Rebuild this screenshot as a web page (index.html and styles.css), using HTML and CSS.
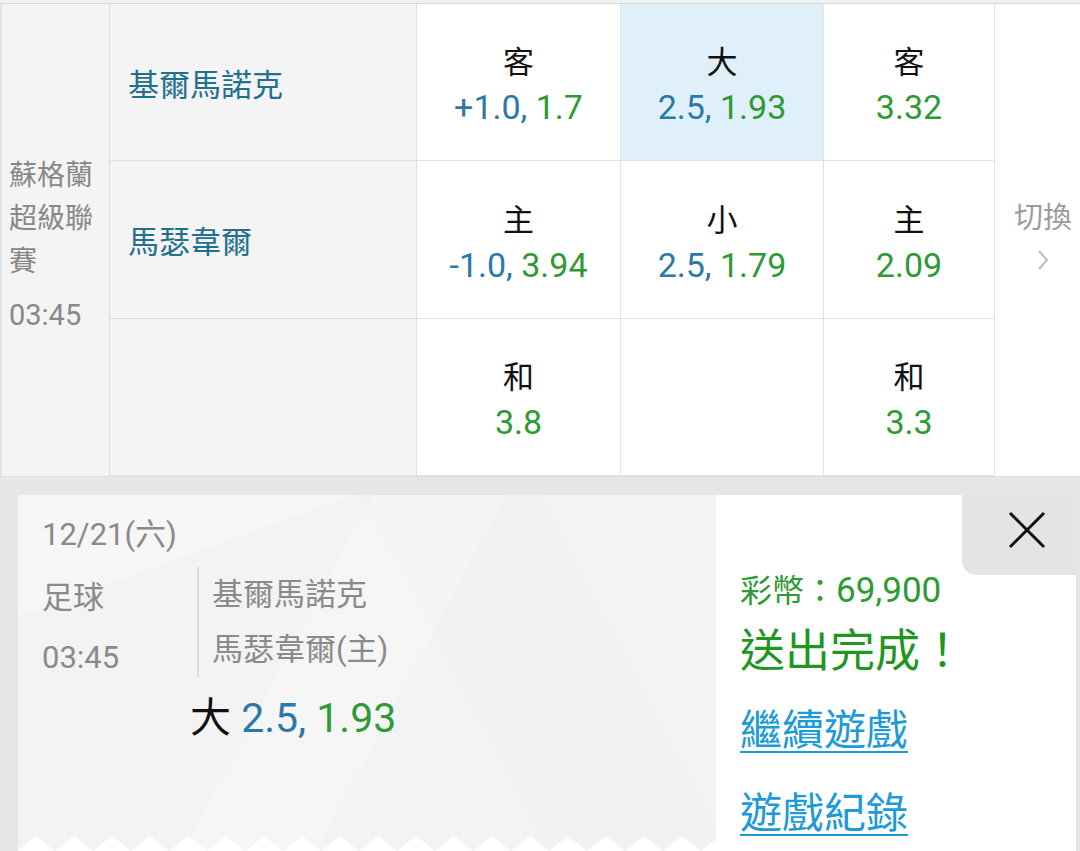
FILE: index.html
```html
<!DOCTYPE html>
<html lang="zh-Hant">
<head>
<meta charset="utf-8">
<title>投注</title>
<link rel="stylesheet" href="styles.css">
</head>
<body>
<div class="strip"></div>
<div class="board">
  <div class="league">
    <div class="league-name">蘇格蘭超級聯賽</div>
    <div class="league-time">03:45</div>
  </div>

  <div class="team">基爾馬諾克</div>
  <div class="odd"><div class="lbl">客</div><div class="val"><span class="b">+1.0,</span> <span class="g">1.7</span></div></div>
  <div class="odd sel"><div class="lbl">大</div><div class="val"><span class="b">2.5,</span> <span class="g">1.93</span></div></div>
  <div class="odd"><div class="lbl">客</div><div class="val"><span class="g">3.32</span></div></div>

  <div class="team">馬瑟韋爾</div>
  <div class="odd"><div class="lbl">主</div><div class="val"><span class="b">-1.0,</span> <span class="g">3.94</span></div></div>
  <div class="odd"><div class="lbl">小</div><div class="val"><span class="b">2.5,</span> <span class="g">1.79</span></div></div>
  <div class="odd"><div class="lbl">主</div><div class="val"><span class="g">2.09</span></div></div>

  <div class="team"></div>
  <div class="odd"><div class="lbl">和</div><div class="val"><span class="g">3.8</span></div></div>
  <div class="odd"></div>
  <div class="odd"><div class="lbl">和</div><div class="val"><span class="g">3.3</span></div></div>

  <div class="switch">
    <div class="switch-text">切換</div>
    <svg class="chev" width="14" height="24" viewBox="0 0 14 24"><path d="M3 3 L11 12 L3 21" fill="none" stroke="#bdbdbd" stroke-width="2"/></svg>
  </div>
</div>

<div class="panel">
  <div class="ticket">
    <div class="ticket-body">
      <div class="date">12/21(六)</div>
      <div class="match">
        <div class="sport">
          <div>足球</div>
          <div class="sport-time">03:45</div>
        </div>
        <div class="teams">
          <div>基爾馬諾克</div>
          <div class="team2">馬瑟韋爾(主)</div>
        </div>
      </div>
      <div class="pick">大 <span class="b">2.5,</span> <span class="g">1.93</span></div>
    </div>
    <svg class="zigzag" width="698" height="16" viewBox="0 0 698 16">
      <defs>
        <pattern id="zz" x="-1" y="0" width="38" height="16" patternUnits="userSpaceOnUse">
          <path d="M0 16 L19 1 L38 16 Z" fill="#ffffff"/>
        </pattern>
      </defs>
      <rect width="698" height="16" fill="url(#zz)"/>
    </svg>
  </div>
  <div class="result">
    <div class="coins">彩幣：<span class="num">69,900</span></div>
    <div class="done">送出完成！</div>
    <a class="link first" href="#">繼續遊戲</a>
    <a class="link" href="#">遊戲紀錄</a>
    <div class="close">
      <svg width="38" height="38" viewBox="0 0 38 38"><path d="M2 2 L36 36 M36 2 L2 36" stroke="#111" stroke-width="3" fill="none"/></svg>
    </div>
  </div>
</div>
</body>
</html>
```

FILE: styles.css
```css
html, body {
  margin: 0;
  padding: 0;
}
body {
  width: 1080px;
  height: 851px;
  overflow: hidden;
  background: #e6e6e6;
  font-family: Roboto, "Noto Sans CJK TC", sans-serif;
}
.strip {
  height: 3px;
  background: #eef0f2;
}
.board {
  display: grid;
  grid-template-columns: 108px 307px 204px 203px 171px 1fr;
  grid-template-rows: 157px 158px 157px;
  border-top: 1px solid #d8dadd;
  border-left: 2px solid #e2e3e5;
  background: #fff;
}
.league {
  grid-column: 1;
  grid-row: 1 / span 3;
  background: #f4f4f4;
  border-right: 1px solid #dcdcdc;
  display: flex;
  flex-direction: column;
  justify-content: center;
  padding: 10px 0 0 7px;
  color: #888;
  font-size: 28px;
}
.league-name {
  line-height: 43px;
  width: 90px;
}
.league-time {
  margin-top: 11px;
  line-height: 43px;
  font-size: 29px;
}
.team {
  background: #f4f4f4;
  border-right: 1px solid #e0e0e0;
  border-bottom: 1px solid #e0e0e0;
  display: flex;
  align-items: center;
  padding-left: 18px;
  color: #22708f;
  font-size: 31px;
}
.odd {
  border-right: 1px solid #e2e2e2;
  border-bottom: 1px solid #e2e2e2;
  display: flex;
  flex-direction: column;
  align-items: center;
  justify-content: center;
  padding-top: 6px;
  box-sizing: border-box;
}
.odd.sel {
  background: #dff0fa;
}
.lbl {
  font-size: 31px;
  line-height: 44px;
  color: #111;
}
.val {
  font-size: 34px;
  line-height: 44px;
}
.b { color: #2a79a8; }
.g { color: #2e9a35; }
.switch {
  grid-column: 6;
  grid-row: 1 / span 3;
  background: #fff;
  display: flex;
  flex-direction: column;
  align-items: center;
  justify-content: center;
  padding: 0 0 11px 11px;
  box-sizing: border-box;
  color: #9c9c9c;
  font-size: 29px;
}
.switch-text {
  line-height: 40px;
}
.chev {
  margin-top: 10px;
}

.panel {
  display: flex;
  height: 375px;
  box-sizing: border-box;
  padding: 18px 4px 0 18px;
  border-top: 1px solid #dedede;
}
.ticket {
  width: 698px;
  display: flex;
  flex-direction: column;
  background:
    linear-gradient(118deg, transparent 0 40%, rgba(255,255,255,0.22) 40% 55%, transparent 55%),
    linear-gradient(62deg, transparent 0 60%, rgba(0,0,0,0.008) 60% 80%, transparent 80%),
    linear-gradient(160deg, rgba(255,255,255,0.25) 0 20%, transparent 20%),
    #f3f3f3;
}
.ticket-body {
  flex: 1;
  padding: 20px 0 0 24px;
  color: #8a8a8a;
  font-size: 31px;
}
.date {
  line-height: 40px;
}
.match {
  display: flex;
  margin-top: 12px;
}
.sport {
  width: 155px;
  line-height: 34px;
  padding-top: 14px;
}
.sport-time {
  margin-top: 26px;
}
.teams {
  border-left: 2px solid #dcdcdc;
  padding-left: 13px;
  line-height: 40px;
  padding-top: 8px;
  height: 102px;
}
.team2 {
  margin-top: 15px;
}
.pick {
  margin: 15px 0 0 148px;
  font-size: 41px;
  line-height: 52px;
  color: #111;
}
.zigzag {
  display: block;
}
.result {
  flex: 1;
  background: #fff;
  position: relative;
  padding: 73px 0 0 24px;
  display: flex;
  flex-direction: column;
  align-items: flex-start;
}
.coins {
  font-size: 32px;
  line-height: 46px;
  color: #2e9a35;
}
.coins .num {
  font-size: 35px;
}
.done {
  font-size: 45px;
  line-height: 58px;
  color: #1f961f;
  margin-top: 9px;
}
.link {
  font-size: 42px;
  line-height: 58px;
  color: #1d9ad8;
  text-decoration: underline;
  text-underline-offset: 6px;
  text-decoration-thickness: 2px;
}
.link.first {
  margin-top: 21px;
}
.link + .link {
  margin-top: 25px;
}
.close {
  position: absolute;
  top: 0;
  right: 0;
  width: 114px;
  height: 80px;
  background: #e4e4e4;
  border-bottom-left-radius: 14px;
  display: flex;
  align-items: center;
  justify-content: center;
  padding: 0 0 10px 16px;
  box-sizing: border-box;
}
```
